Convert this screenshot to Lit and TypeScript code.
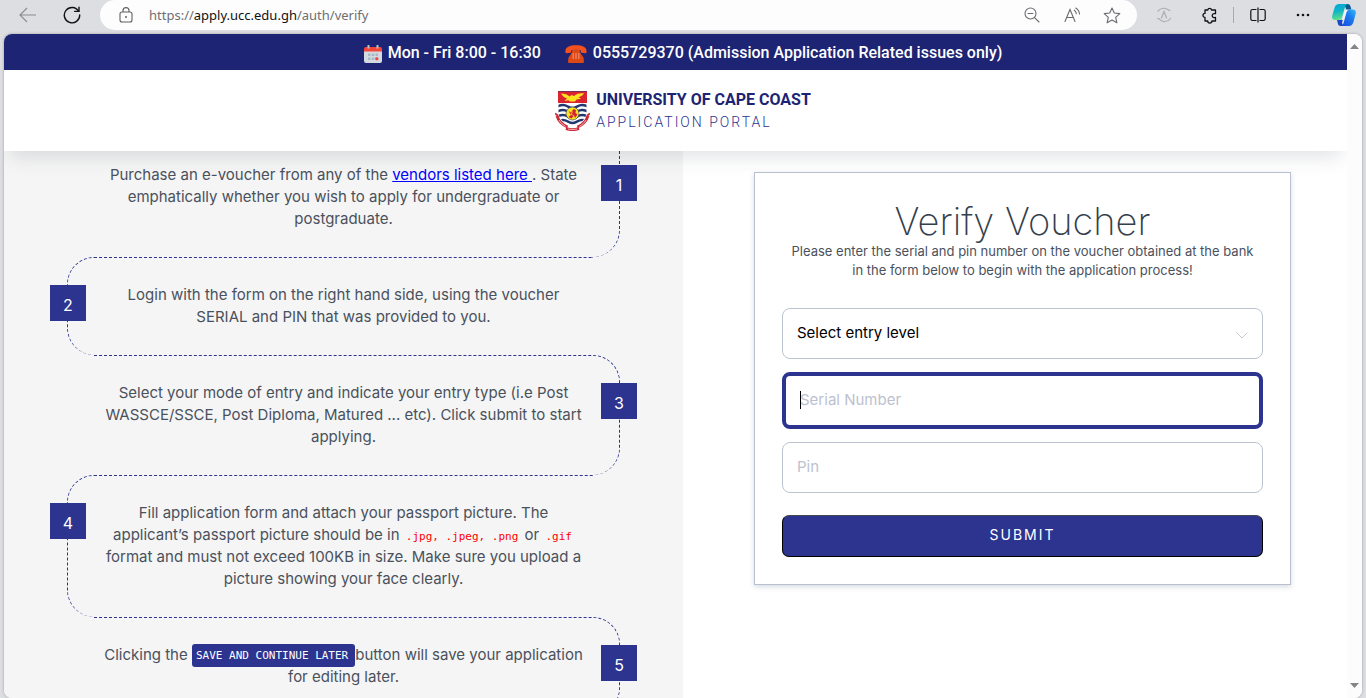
import { LitElement, html, css, svg } from "lit";
import { customElement } from "lit/decorators.js";

const backIcon = svg`<svg width="18" height="16" viewBox="0 0 18 16" fill="none" stroke="#8a8b8e" stroke-width="1.1"><path d="M17 8H1.5M8 1L1 8l7 7"/></svg>`;
const reloadIcon = svg`<svg width="18" height="18" viewBox="0 0 18 18" fill="none" stroke="#111" stroke-width="1.4" stroke-linecap="round"><path d="M15.6 5.2A7.7 7.7 0 1 0 16.7 9"/><path d="M16 1.2v4.2h-4.3"/></svg>`;
const lockIcon = svg`<svg width="14" height="16" viewBox="0 0 14 16" fill="none" stroke="#5f6063" stroke-width="1.1"><rect x="1" y="5" width="12" height="10" rx="2"/><path d="M4 5V3.6a3 3 0 0 1 6 0V5"/><circle cx="7" cy="10" r="1" fill="#5f6063" stroke="none"/></svg>`;
const zoomOutIcon = svg`<svg width="16" height="16" viewBox="0 0 16 16" fill="none" stroke="#6a6b6e" stroke-width="1.1" stroke-linecap="round"><circle cx="6.5" cy="6.5" r="5.5"/><path d="M4 6.5h5M10.6 10.6L15 15"/></svg>`;
const readIcon = svg`<svg width="17" height="16" viewBox="0 0 17 16" fill="none" stroke="#6a6b6e" stroke-width="1.1" stroke-linecap="round"><path d="M1 14.5L6 2.5l5 12M2.7 10.5h6.6M10.3 3.2c1.2.8 1.9 2 2 3.6M11.7 1c2.2 1.2 3.6 3.3 3.8 6"/></svg>`;
const starIcon = svg`<svg width="18" height="17" viewBox="0 0 18 17" fill="none" stroke="#6a6b6e" stroke-width="1.1" stroke-linejoin="round"><path d="M9 1l2.3 5 5.500.6-4.100 3.700 1.200 5.500L9 13l-4.900 2.800 1.200-5.500L1.200 6.600l5.500-.6z"/></svg>`;
const syncIcon = svg`<svg width="16" height="16" viewBox="0 0 16 16" fill="none" stroke="#adaeb1" stroke-width="1.2" stroke-linecap="round"><path d="M2 4.200C4.500.6 9.500.4 12.500 3M14 3.500l-1.300-.4M1.500 11.500l2.200.6M14.500 11.500c-2.500 3.800-8 4-11 .8M5.500 11L8 4.500l2.500 6.500M7 1.500"/></svg>`;
const puzzleIcon = svg`<svg width="17" height="17" viewBox="0 0 17 17" fill="none" stroke="#111" stroke-width="1.3" stroke-linejoin="round"><path d="M4 3h2.700a2 2 0 0 1 3.900 0H14.500v3.700h-.7a2 2 0 1 0 0 3.800h.7V14h-3.600a2 2 0 0 1-4.200 0H4v-3.600a2 2 0 1 1 0-4z"/></svg>`;
const splitIcon = svg`<svg width="16" height="16" viewBox="0 0 16 16" fill="none" stroke="#111" stroke-width="1.2"><path d="M6.500 2.500h-4a1.700 1.700 0 0 0-1.700 1.700v7.600a1.700 1.700 0 0 0 1.700 1.700h4M9.500 2.500h4a1.700 1.700 0 0 1 1.700 1.700v7.600a1.700 1.700 0 0 1-1.700 1.700h-4M8 .5v15"/></svg>`;
const dotsIcon = svg`<svg width="14" height="4" viewBox="0 0 14 4" fill="#111"><circle cx="2" cy="2" r="1.300"/><circle cx="7" cy="2" r="1.300"/><circle cx="12" cy="2" r="1.300"/></svg>`;
const copilotIcon = svg`<svg width="24" height="22" viewBox="0 0 24 22">
  <defs>
    <linearGradient id="cpA" x1="0" y1="0" x2="0.200" y2="1"><stop offset="0" stop-color="#06a5dc"/><stop offset=".5" stop-color="#10b5c4"/><stop offset="1" stop-color="#5be08a"/></linearGradient>
    <linearGradient id="cpB" x1="0" y1="1" x2="1" y2="0"><stop offset="0" stop-color="#1a48e0"/><stop offset=".6" stop-color="#1b7df0"/><stop offset="1" stop-color="#36bdf4"/></linearGradient>
  </defs>
  <path d="M12 0h3.500c1.800 0 2.700 1.300 3.200 3l.6 2.500h-5z" fill="#0b5a8c"/>
  <path d="M7 0h8.500c-1.600.5-2.200 2-2.800 4l-2.400 8.500c-.7 2.400-1.600 3.500-3.800 3.500H3c-2.300 0-3.400-1.800-2.800-4.200L2.600 3.500C3.300 1.200 4.700 0 7 0z" fill="url(#cpA)"/>
  <path d="M5 16h3c2 0 3-1.500 3.600-3.500L10 19l1.500 3H8.500c-1.600 0-2.300-1-2.700-2.700z" fill="#1749c8"/>
  <path d="M17 22H9c1.600-.5 2.300-2 2.900-4l2.300-8.500C14.900 7 16 5.500 18.200 5.500H21c2.300 0 3.300 1.800 2.700 4.200l-2.300 8.600C20.700 20.600 19.300 22 17 22z" fill="url(#cpB)"/>
  <path d="M12.800 6h2.700c-1 .8-1.300 2.200-1.700 3.500l-1.900 6.500H9.600c.8-1 1-2 1.300-3z" fill="#eef4fa"/>
</svg>`;
const calendarIcon = svg`<svg width="18" height="18" viewBox="0 0 18 18">
  <path d="M0 6h18v10a2 2 0 0 1-2 2H2a2 2 0 0 1-2-2z" fill="#d3dbe0"/>
  <path d="M2 2h14a2 2 0 0 1 2 2v2.500H0V4a2 2 0 0 1 2-2z" fill="#f4473a"/>
  <path d="M4.500 0v3.500M13.500 0v3.500" stroke="#b9c3cb" stroke-width="2"/>
  <path d="M4 8.500h2.500V11H4zM7.700 8.500h2.600V11H7.700zM11.500 8.500H14V11h-2.500zM4 12.500h2.500V15H4zM7.700 12.500h2.600V15H7.700z" fill="#a9b8c4"/>
  <rect x="11.300" y="12.300" width="3" height="3" rx="1" fill="#f4473a"/>
</svg>`;
const phoneIcon = svg`<svg width="22" height="18" viewBox="0 0 22 18">
  <path d="M.5 7.500C-.3 2.500 4 .3 11 .3s11.300 2.200 10.500 7.200c0 .6-.4.900-1 .8l-3.900-.6c-.6 0-.9-.5-.9-1V5.200C13 4.500 9 4.500 6.300 5.200v1.500c0 .5-.3 1-.9 1l-3.900.6c-.6.1-1-.2-1-.8z" fill="#f4511e"/>
  <path d="M7.500 5h7l.8 3 3.200 4.500.5 4.300c0 .7-.4 1.200-1 1.200H4c-.6 0-1-.5-1-1.200l.500-4.300L6.700 8z" fill="#dd4814"/>
  <path d="M8.200 8v6M11 8v6M13.800 8v6" stroke="#f58a6b" stroke-width="1.200"/>
</svg>`;
const crest = svg`<svg class="crest" width="35" height="40" viewBox="0 0 35 40">
  <defs><clipPath id="shield"><path d="M3.500 12h28v9c0 7-6 12-14 15.500C9.500 33 3.500 28 3.500 21z"/></clipPath></defs>
  <path d="M3 0h29v21c0 7-6.500 13-14.500 16.500C9.500 34 3 28 3 21z" fill="#fff"/>
  <g clip-path="url(#shield)" fill="none" stroke="#21386f" stroke-width="2.400">
    <path d="M-1 16c3.500 0 5-2 9-2s6 3 9.500 3 5.500-3 9.500-3 5.500 2 9 2M-1 21c3.500 0 5-2 9-2s6 3 9.500 3 5.500-3 9.500-3 5.500 2 9 2M-1 26c3.500 0 5-2 9-2s6 3 9.500 3 5.500-3 9.500-3 5.500 2 9 2M-1 31c3.500 0 5-2 9-2s6 3 9.500 3 5.500-3 9.500-3 5.500 2 9 2"/>
  </g>
  <path d="M3 0h29v12H3z" fill="#dc2430"/><path d="M3 .5h29" stroke="#7c2c50"/>
  <path d="M6 2.500c4 0 6.500 1 8.500 3l2-1.500 2.500 1c3-2.500 6-3 10-2.700-1 2-3 3.300-5.500 4l2.500 1.500-4.500.7-1.500 2h-5l-1.500-1.200-4 .7 2.500-2.500C9.500 6.500 7.500 5.200 6 2.500z" fill="#ffe21f"/>
  <circle cx="17.500" cy="22.500" r="6.500" fill="#ffe21f" stroke="#21386f" stroke-width=".6"/>
  <path d="M13.500 20l2.500 1.500L18.500 18l2.500 1-.5 3 2 1.500-2.500 3.500-1-2.500-2.500 3-3-1.500 2.500-2z" fill="#d32436"/>
  <path d="M17.500 20.500l-1.500 3 3 1" stroke="#ffe21f" fill="none" stroke-width=".7"/>
  <path d="M2 24.500c1.500 6 6 9.500 10.500 11.500M33 24.500c-1.500 6-6 9.500-10.500 11.500" fill="none" stroke="#cc2a38" stroke-width="3"/>
  <path d="M11 37.300c4 1.700 9 1.700 13 0" fill="none" stroke="#cc2a38" stroke-width="3"/>
  <path d="M4 29c1.700 3 4 4.800 6.500 6.300M31 29c-1.700 3-4 4.800-6.500 6.300M13 38c3 .8 6 .8 9 0" fill="none" stroke="#f0c6ce" stroke-width=".9"/>
  <path d="M0 22.500l3 2M35 22.500l-3 2" stroke="#cc2a38" stroke-width="1.600"/>
</svg>`;
const chevron = svg`<svg class="chevron" width="12" height="7" viewBox="0 0 12 7" fill="none" stroke="#c9cdd3"><path d="M.5.500L6 6l5.500-5.500"/></svg>`;

const steps = [
  html`Purchase an e-voucher from any of the <a href="#vendors">vendors listed here </a>. State<br />emphatically whether you wish to apply for undergraduate or<br />postgraduate.`,
  html`Login with the form on the right hand side, using the voucher<br />SERIAL and PIN that was provided to you.`,
  html`Select your mode of entry and indicate your entry type (i.e Post<br />WASSCE/SSCE, Post Diploma, Matured ... etc). Click submit to start<br />applying.`,
  html`Fill application form and attach your passport picture. The<br />applicant’s passport picture should be in <code>.jpg, .jpeg, .png</code> or <code>.gif</code><br />format and must not exceed 100KB in size. Make sure you upload a<br />picture showing your face clearly.`,
  html`Clicking the <kbd>SAVE AND CONTINUE LATER</kbd>button will save your application<br />for editing later.`,
];

@customElement("browser-bar")
export class BrowserBar extends LitElement {
  static styles = css`
    :host { display: flex; align-items: center; height: 30px; padding: 0 10px 0 19px; font-family: "Noto Sans", "Open Sans", sans-serif; }
    button { display: grid; place-items: center; flex: none; width: 18px; height: 30px; padding: 0; border: 0; background: none; }
    svg { display: block; }
    .reload { margin-left: 26px; }
    .address { display: flex; align-items: center; flex: 1; height: 30px; margin: 0 18px 0 19px; padding: 0 16px 0 17px; border-radius: 15px; background: #fdfdfe; }
    .url { flex: 1; margin-left: 14px; font-size: 13px; color: #6e6f72; }
    .host { color: #111; }
    .actions { display: flex; gap: 22px; }
    .tools { display: flex; align-items: center; gap: 27px; }
    .group { display: flex; align-items: center; gap: 15px; }
    .end { display: flex; align-items: center; gap: 20px; }
    .rule { width: 1px; height: 16px; background: #a9aaad; }
    .copilot { width: 24px; }
  `;
  render() {
    return html`
      <button aria-label="Back">${backIcon}</button>
      <button class="reload" aria-label="Refresh">${reloadIcon}</button>
      <div class="address">
        <button aria-label="Site information">${lockIcon}</button>
        <div class="url">https://<span class="host">apply.ucc.edu.gh</span>/auth/verify</div>
        <div class="actions">
          <button aria-label="Zoom out">${zoomOutIcon}</button>
          <button aria-label="Read aloud">${readIcon}</button>
          <button aria-label="Add to favourites">${starIcon}</button>
        </div>
      </div>
      <div class="tools">
        <button aria-label="Sync">${syncIcon}</button>
        <div class="group">
          <button aria-label="Extensions">${puzzleIcon}</button>
          <span class="rule"></span>
          <button aria-label="Split screen">${splitIcon}</button>
        </div>
        <div class="end">
          <button aria-label="More">${dotsIcon}</button>
          <button class="copilot" aria-label="Copilot">${copilotIcon}</button>
        </div>
      </div>
    `;
  }
}

@customElement("step-list")
export class StepList extends LitElement {
  static styles = css`
    :host { display: block; }
    .list { margin: 0; padding: 0; list-style: none; }
    .step { position: relative; border: 0 dashed #2c3490; border-top-width: 1px; padding: 26px 0 27px; font-size: 15px; line-height: 22px; color: #4a515c; text-align: center; white-space: nowrap; }
    .odd { margin-left: 27px; padding-right: 26px; border-right-width: 1px; border-radius: 0 27px 27px 0; }
    .even { margin-right: 27px; padding-left: 26px; border-left-width: 1px; border-radius: 27px 0 0 27px; }
    .step:first-child { border-top-right-radius: 0; }
    .badge { position: absolute; top: 27px; width: 36px; height: 36px; background: #2c3490; color: #fff; font-size: 16px; line-height: 40px; }
    .odd .badge { right: -18px; }
    .even .badge { left: -18px; }
    a { color: #00f; white-space: pre; }
    code { margin: 0 2px; color: #f00; font: 11px/11px "DejaVu Sans Mono", monospace; }
    kbd { display: inline-block; height: 23px; margin: -1px 0; padding: 0 7px 0 4px; border-radius: 3px; background: #2c3490; color: #fff; font: 11px/24px "DejaVu Sans Mono", monospace; vertical-align: middle; }
  `;
  render() {
    return html`<ol class="list">
      ${steps.map((text, i) => html`<li class="step ${i % 2 ? "even" : "odd"}"><span class="badge">${i + 1}</span>${text}</li>`)}
    </ol>`;
  }
}

@customElement("voucher-form")
export class VoucherForm extends LitElement {
  static styles = css`
    :host { display: block; }
    .card { display: flex; flex-direction: column; padding: 27px; border: 1px solid #b8c0d2; background: #fff; box-shadow: 0 2px 5px rgba(60, 80, 110, 0.200); }
    .title { margin: 0; font-size: 38px; font-weight: 200; line-height: 42px; color: #343e4c; text-align: center; }
    .lead { margin: 0; font-size: 13px; line-height: 19px; color: #4a515c; text-align: center; }
    .fields { display: flex; flex-direction: column; gap: 13px; margin-top: 28px; }
    .field { position: relative; display: grid; }
    .control { box-sizing: border-box; width: 100%; height: 51px; margin: 0; padding: 0 14px 2px; border: 1px solid #bcc4d2; border-radius: 8px; outline: 0; background: #fff; color: #000; font: 15px Inter, "Open Sans", sans-serif; appearance: none; }
    .control::placeholder { color: #bcc1cf; opacity: 1; }
    .active { height: 57px; border: 4px solid #2c3490; }
    .caret { position: absolute; left: 18px; top: 19px; width: 1px; height: 18px; background: #000; }
    .chevron { position: absolute; right: 15px; top: 24px; pointer-events: none; }
    .submit { height: 42px; margin: 22px 0 0; padding: 0 0 3px; border: 1px solid #000; border-top-color: #444a52; border-radius: 7px; background: #2c3490; color: #fff; font: 14px Inter, "Open Sans", sans-serif; letter-spacing: 2px; }
  `;
  render() {
    return html`<form class="card" @submit=${(e: Event) => e.preventDefault()}>
      <h1 class="title">Verify Voucher</h1>
      <p class="lead">Please enter the serial and pin number on the voucher obtained at the bank<br />in the form below to begin with the application process!</p>
      <div class="fields">
        <div class="field">
          <select class="control" aria-label="Entry level"><option>Select entry level</option></select>
          ${chevron}
        </div>
        <div class="field">
          <input class="control active" type="text" aria-label="Serial Number" placeholder="Serial Number" />
          <span class="caret"></span>
        </div>
        <div class="field"><input class="control" type="text" aria-label="Pin" placeholder="Pin" /></div>
      </div>
      <button class="submit" type="submit">SUBMIT</button>
    </form>`;
  }
}

@customElement("app-root")
export class AppRoot extends LitElement {
  static styles = css`
    :host { display: flex; flex-direction: column; gap: 4px; height: 100vh; overflow: hidden; background: #dddee2; font-family: Inter, "Open Sans", sans-serif; }
    .window { display: flex; flex: 1; min-height: 0; margin: 0 4px; border-radius: 8px; overflow: hidden; background: #fff; box-shadow: 0 0 3px rgba(0, 0, 0, 0.300); }
    .page { display: flex; flex-direction: column; flex: 1; min-width: 0; overflow: hidden; }
    .notice, .brand { display: flex; justify-content: center; padding-left: 15px; font-family: Roboto, sans-serif; }
    .notice { align-items: center; gap: 24px; height: 36px; background: #1d2473; color: #fff; font-size: 16px; font-weight: 500; z-index: 2; }
    .item { display: flex; align-items: center; gap: 6px; }
    .item svg { margin-top: 3px; }
    .brand { gap: 6px; height: 60px; padding-top: 21px; background: #fff; box-shadow: 0 12px 18px -6px rgba(50, 60, 75, 0.140); z-index: 1; }
    .words { display: flex; flex-direction: column; margin-top: -2px; }
    .name { font-size: 16px; font-weight: 700; line-height: 22px; color: #1d2473; }
    .portal { font-size: 14px; font-weight: 300; line-height: 22px; letter-spacing: 2px; color: #2c3490; }
    .columns { display: grid; grid-template-columns: minmax(0, 679fr) minmax(0, 664fr); flex: 1; min-height: 0; overflow: hidden; }
    .guide { padding: 0 63px; background: #f5f5f5; }
    .steps { margin-top: -14px; }
    .entry { padding: 21px 56px 0 71px; }
    .scroll { display: flex; flex-direction: column; justify-content: space-between; align-items: center; width: 15px; padding: 10px 0; box-sizing: border-box; background: #fcfcfd; }
  `;
  render() {
    return html`
      <browser-bar></browser-bar>
      <div class="window">
        <div class="page">
          <div class="notice">
            <span class="item">${calendarIcon}Mon - Fri 8:00 - 16:30</span>
            <span class="item">${phoneIcon}0555729370 (Admission Application Related issues only)</span>
          </div>
          <header class="brand">
            ${crest}
            <div class="words"><span class="name">UNIVERSITY OF CAPE COAST</span><span class="portal">APPLICATION PORTAL</span></div>
          </header>
          <main class="columns">
            <section class="guide"><step-list class="steps"></step-list></section>
            <section class="entry"><voucher-form></voucher-form></section>
          </main>
        </div>
        <div class="scroll">
          <svg width="9" height="5" viewBox="0 0 9 5"><path d="M4.500 0L9 5H0z" fill="#858587"/></svg>
          <svg width="9" height="5" viewBox="0 0 9 5"><path d="M0 0h9L4.500 5z" fill="#858587"/></svg>
        </div>
      </div>
    `;
  }
}
